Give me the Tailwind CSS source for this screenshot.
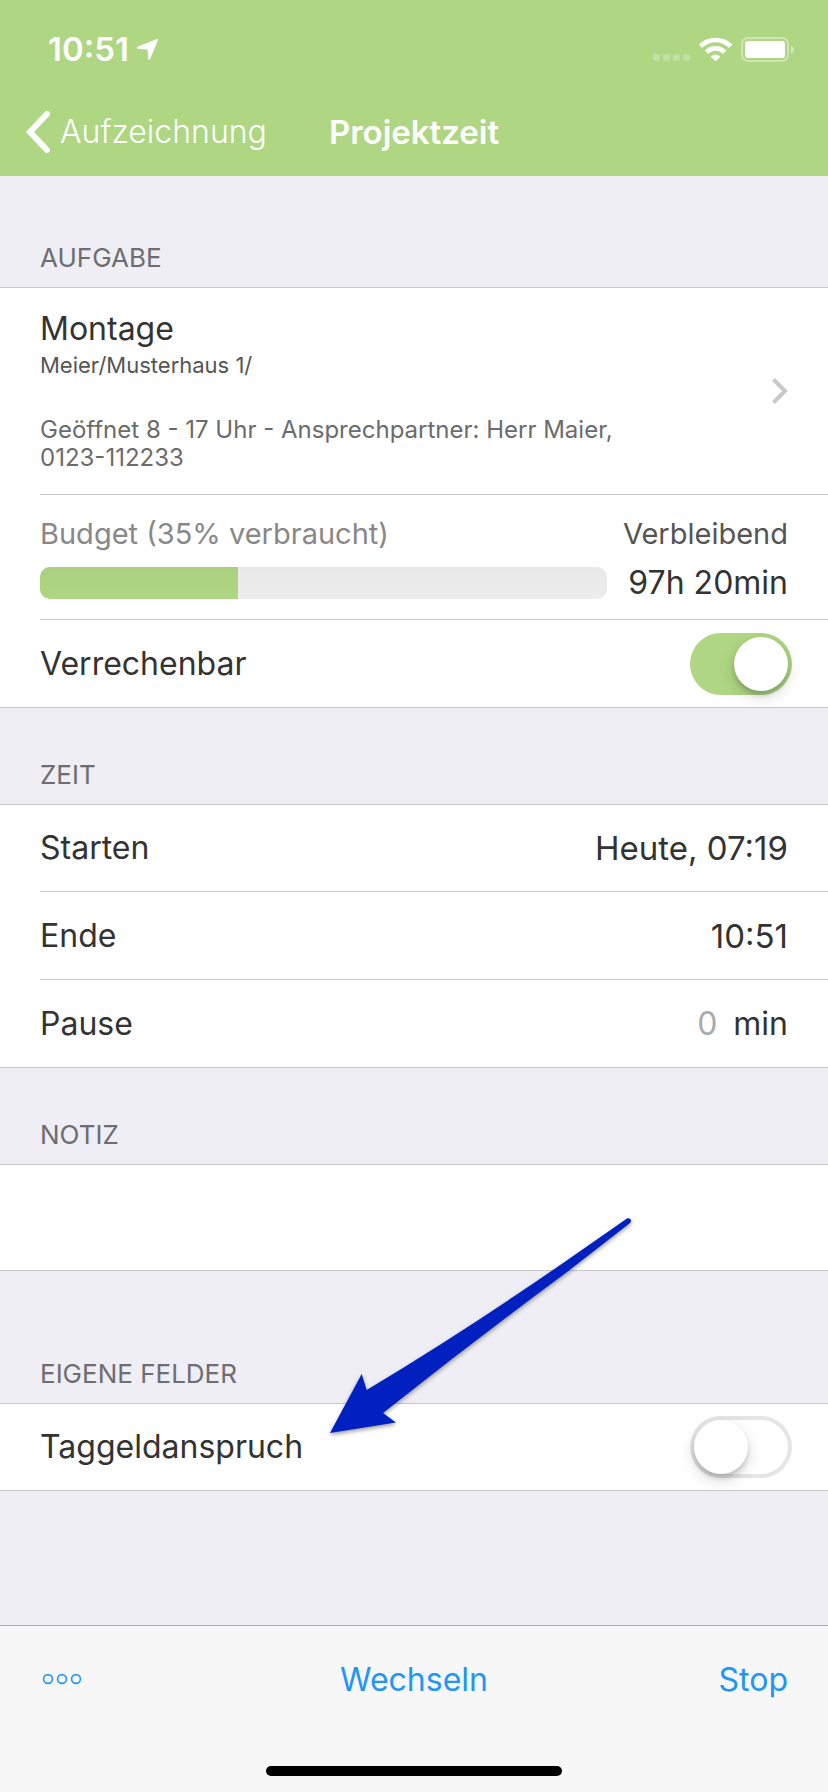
<!DOCTYPE html>
<html lang="de">
<head>
    <meta charset="UTF-8">
    <meta name="viewport" content="width=device-width, initial-scale=1.0">
    <title>Projektzeit</title>
    <script src="https://cdn.jsdelivr.net/npm/@tailwindcss/browser@4"></script>
</head>
<body class="min-h-screen flex flex-col bg-[#efeef4] text-[#333333] text-[32px] leading-10 font-[Inter,sans-serif]">
    <!-- Header -->
    <header class="bg-[#aed683] text-white">
        <div class="h-22 pt-[10px] pl-12 pr-[34px] flex items-center justify-between">
            <div class="flex items-center gap-2">
                <span class="text-[33px] font-semibold">10:51</span>
                <svg class="w-[21px] h-[21px]" viewBox="0 0 21 21" fill="currentColor" aria-hidden="true">
                    <path d="M19.3 0.2 1 7.4C-.4 8-.3 9.6 1.2 9.8L10 10.4Q10.6 10.4 10.6 11L11 19.2C11.1 20.8 12.700 20.900 13.300 19.600L20.800 1.700C21.300.6 20.400-.2 19.300.2Z"/>
                </svg>
            </div>
            <div class="flex items-center">
                <svg class="w-[141px] h-[25px]" viewBox="0 0 141 25" fill="currentColor" aria-hidden="true">
                    <g opacity="0.25">
                        <rect x="0" y="17" width="7" height="7" rx="2"/>
                        <rect x="10" y="17" width="7" height="7" rx="2"/>
                        <rect x="20" y="17" width="7" height="7" rx="2"/>
                        <rect x="30" y="17" width="7" height="7" rx="2"/>
                    </g>
                    <path d="M46.200 7.300A23.500 23.500 0 0 1 79 7.300Q79.400 7.700 79 8.100L76.500 10.600Q76.100 11 75.700 10.600A18.700 18.700 0 0 0 49.500 10.600Q49.100 11 48.700 10.600L46.200 8.100Q45.800 7.700 46.200 7.300Z"/>
                    <path d="M52.200 13.300A15 15 0 0 1 73 13.300Q73.400 13.700 73 14.100L70.400 16.600Q70 17 69.600 16.600A10.200 10.200 0 0 0 55.600 16.600Q55.200 17 54.800 16.600L52.200 14.100Q51.800 13.700 52.200 13.300Z"/>
                    <path d="M58.200 19.300A6.600 6.600 0 0 1 67 19.300Q67.400 19.700 67 20.100L63 23.900Q62.600 24.300 62.200 23.900L58.200 20.100Q57.800 19.700 58.200 19.300Z"/>
                    <rect x="89" y="1" width="46" height="23" rx="6" fill="none" stroke="currentColor" stroke-width="2" opacity="0.4"/>
                    <rect x="92" y="4" width="40" height="17" rx="3"/>
                    <path d="M138 8.500Q141 9.500 141 12.500T138 16.500Z" opacity="0.45"/>
                </svg>
            </div>
        </div>
        <nav class="h-22 px-6 grid grid-cols-[1fr_auto_1fr] items-center">
            <a href="#" class="flex items-center gap-2 font-light">
                <svg class="w-7 h-[42px]" viewBox="0 0 28 42" fill="none" stroke="currentColor" stroke-width="6" stroke-linecap="round" stroke-linejoin="miter" aria-hidden="true">
                    <path d="M23 3 6 21 23 39"/>
                </svg>
                Aufzeichnung
            </a>
            <h1 class="text-[33px] font-semibold">Projektzeit</h1>
        </nav>
    </header>

    <main class="flex-1">
        <!-- Task -->
        <section>
            <h2 class="px-10 pt-[66px] pb-[13px] text-[26px] leading-8 text-[#6d6d72]">AUFGABE</h2>
            <div class="bg-white border-y border-[#c8c7cc] pl-10">
                <a href="#" class="flex items-center justify-between border-b border-[#c8c7cc] pt-[21px] pb-[22px] pr-10">
                    <div class="max-w-[600px]">
                        <h3>Montage</h3>
                        <p class="mt-0.5 text-[22px] leading-7 text-[#555555]">Meier/Musterhaus 1/</p>
                        <p class="mt-[37px] text-2xl leading-7 text-[#6b6b6b]">Geöffnet 8 - 17 Uhr - Ansprechpartner: Herr Maier, 0123-112233</p>
                    </div>
                    <svg class="w-4 h-[26px]" viewBox="0 0 16 26" fill="none" stroke="#c7c7cc" stroke-width="4" aria-hidden="true">
                        <path d="M1.500 1.500 13 13 1.500 24.500"/>
                    </svg>
                </a>
                <div class="grid grid-cols-[1fr_auto] gap-x-4 gap-y-[13px] items-center border-b border-[#c8c7cc] pt-[19px] pb-5 pr-10">
                    <span id="budget" class="text-[29px] text-[#888888]">Budget (35% verbraucht)</span>
                    <span class="text-[29px] text-right text-[#555555]">Verbleibend</span>
                    <div role="progressbar" aria-labelledby="budget" aria-valuenow="35" aria-valuemin="0" aria-valuemax="100" class="h-8 rounded-[10px] overflow-hidden bg-linear-to-b from-[#e8e8e8] to-[#ededed]">
                        <div class="h-full bg-linear-to-b from-[#aad07f] to-[#aed683]" style="width: 35%"></div>
                    </div>
                    <span class="leading-8 text-right">97h 20min</span>
                </div>
                <div class="h-[87px] pr-9 flex items-center justify-between">
                    <label for="billable">Verrechenbar</label>
                    <input id="billable" type="checkbox" role="switch" checked class="appearance-none w-[102px] h-[62px] rounded-full p-1 flex shadow-[inset_0_0_0_4px_#e5e5e5] checked:bg-[#aed683] checked:shadow-none checked:justify-end before:block before:w-[54px] before:h-[54px] before:rounded-full before:bg-white before:shadow-[0_6px_16px_rgba(0,0,0,0.15),0_4px_5px_rgba(0,0,0,0.15)]">
                </div>
            </div>
        </section>

        <!-- Time -->
        <section>
            <h2 class="px-10 pt-[51px] pb-[13px] text-[26px] leading-8 text-[#6d6d72]">ZEIT</h2>
            <div class="bg-white border-y border-[#c8c7cc] pl-10">
                <div class="h-[87px] pr-10 flex items-center justify-between border-b border-[#c8c7cc]">
                    <span>Starten</span>
                    <button type="button" class="text-[33px]">Heute, 07:19</button>
                </div>
                <div class="h-[88px] pr-10 flex items-center justify-between border-b border-[#c8c7cc]">
                    <span>Ende</span>
                    <button type="button" class="text-[33px]">10:51</button>
                </div>
                <div class="h-[87px] pr-10 flex items-center justify-between">
                    <label for="pause">Pause</label>
                    <div class="flex items-center gap-4">
                        <input id="pause" type="text" inputmode="numeric" placeholder="0" class="w-40 text-right outline-none placeholder:text-[#aaaaaa]">
                        <span>min</span>
                    </div>
                </div>
            </div>
        </section>

        <!-- Note -->
        <section>
            <h2 class="px-10 pt-[51px] pb-[13px] text-[26px] leading-8 text-[#6d6d72]"><label for="note">NOTIZ</label></h2>
            <div class="bg-white border-y border-[#c8c7cc]">
                <textarea id="note" class="block w-full h-[105px] px-10 py-6 resize-none outline-none"></textarea>
            </div>
        </section>

        <!-- Custom fields -->
        <section class="relative">
            <h2 class="px-10 pt-[87px] pb-[13px] text-[26px] leading-8 text-[#6d6d72]">EIGENE FELDER</h2>
            <div class="bg-white border-y border-[#c8c7cc] pl-10">
                <div class="h-[86px] pr-9 flex items-center justify-between">
                    <label for="allowance">Taggeldanspruch</label>
                    <input id="allowance" type="checkbox" role="switch" class="appearance-none w-[102px] h-[62px] rounded-full p-1 flex shadow-[inset_0_0_0_4px_#e5e5e5] checked:bg-[#aed683] checked:shadow-none checked:justify-end before:block before:w-[54px] before:h-[54px] before:rounded-full before:bg-white before:shadow-[0_6px_16px_rgba(0,0,0,0.15),0_4px_5px_rgba(0,0,0,0.15)]">
                </div>
            </div>
            <!-- Pointer to the custom field -->
            <svg class="absolute left-[330px] -top-[53px] w-[302px] h-[216px] overflow-visible pointer-events-none drop-shadow-[0_2px_2px_rgba(0,0,0,0.4)]" viewBox="0 0 302 216" fill="#0020c0" aria-hidden="true">
                <path d="M0 215 31.700 156 36.700 172Q135 113 236 43L297 .5C300-1 302.500 2.500 300 5L237 54Q145 122 53 195L66 204.500Z"/>
            </svg>
        </section>
    </main>

    <!-- Toolbar -->
    <footer class="bg-[#f7f7f7] border-t border-[#a7a7aa] text-[#2196f3]">
        <div class="px-10 pt-[34px] pb-[66px] grid grid-cols-3 items-center">
            <button type="button" aria-label="Mehr" class="justify-self-start">
                <svg class="w-[42px] h-10" viewBox="0 0 42 40" fill="none" stroke="currentColor" stroke-width="1.600" aria-hidden="true">
                    <circle cx="8" cy="19" r="4.400"/>
                    <circle cx="22" cy="19" r="4.400"/>
                    <circle cx="36" cy="19" r="4.400"/>
                </svg>
            </button>
            <button type="button" class="justify-self-center">Wechseln</button>
            <button type="button" class="justify-self-end">Stop</button>
        </div>
        <div class="w-[296px] h-[10px] mx-auto mb-4 rounded-full bg-black"></div>
    </footer>
</body>
</html>
